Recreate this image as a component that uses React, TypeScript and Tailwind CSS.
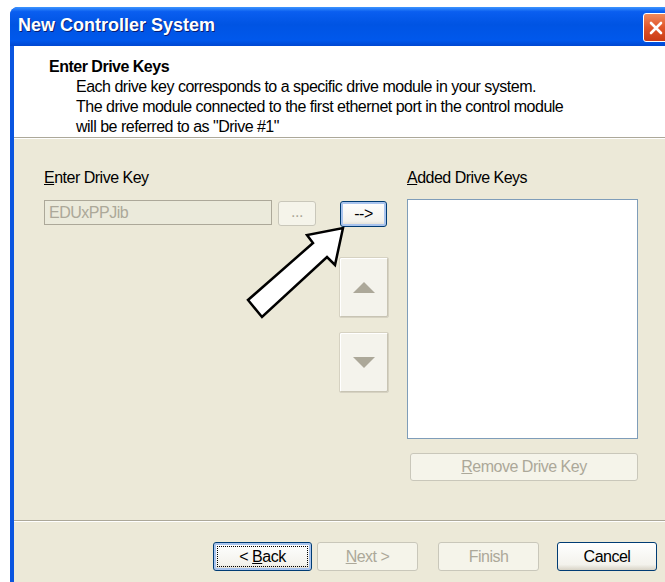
import React from 'react';

type BtnProps = {
  children?: React.ReactNode;
  className?: string;
  variant?: 'normal' | 'default' | 'disabled';
};

// Luna-style push button
const XpButton = ({ children, className = '', variant = 'normal' }: BtnProps) => {
  const look =
    variant === 'disabled'
      ? 'border-[#c9c7ba] bg-[#f5f4ea] text-[#aca899]'
      : variant === 'default'
        ? 'border-[#003c74] bg-[linear-gradient(to_bottom,#ffffff,#f3f2ec_80%,#dcd8cc)] text-black shadow-[inset_0_0_0_2px_#a9c4ee]'
        : 'border-[#003c74] bg-[linear-gradient(to_bottom,#ffffff,#f3f2ec_80%,#d8d3c6)] text-black';
  return (
    <div
      className={`flex shrink-0 items-center justify-center rounded-[3px] border text-[16px] leading-none tracking-[-0.5px] ${look} ${className}`}
    >
      {children}
    </div>
  );
};

// Greyed-out move button with a triangle glyph
const ArrowButton = ({ up }: { up: boolean }) => (
  <div className="flex h-[61px] w-[50px] items-center justify-center rounded-[2px] border border-[#d6d2c2] bg-[#f4f3ec] shadow-[inset_-1px_-1px_0_#c8c4b4,inset_1px_1px_0_#ffffff]">
    <svg width="22" height="11" viewBox="0 0 22 11">
      {up ? <polygon points="0,11 22,11 11,0" fill="#aca899" /> : <polygon points="0,0 22,0 11,11" fill="#aca899" />}
    </svg>
  </div>
);

const App = () => {
  return (
    <div
      className="h-[582px] w-[665px] overflow-hidden bg-white pl-[10px] pt-[7px]"
      style={{ fontFamily: '"Liberation Sans", Arial, sans-serif' }}
    >
      <div className="flex h-full w-[665px] flex-col overflow-hidden rounded-t-[8px] bg-[#0054e3]">
        {/* Title bar */}
        <div className="flex h-[39px] shrink-0 justify-between bg-[linear-gradient(to_bottom,#3d95ff_0%,#0a5ef0_12%,#0054e3_45%,#0058ec_85%,#0047d1_100%)] pl-[8px] pr-[6px]">
          <span className="self-center pb-[2px] text-[18px] font-bold text-white [text-shadow:1px_1px_0_#0a1e72]">
            New Controller System
          </span>
          <div className="mt-[6px] flex h-[29px] w-[26px] items-center justify-center rounded-[3px] border border-white bg-[linear-gradient(to_bottom,#f08a5d,#e0552a_50%,#c93b16)]">
            <svg width="14" height="14" viewBox="0 0 14 14">
              <path d="M2 2 L12 12 M12 2 L2 12" stroke="white" strokeWidth="2.6" strokeLinecap="round" />
            </svg>
          </div>
        </div>

        {/* Client area */}
        <div className="flex flex-1 flex-col border-l-4 border-[#0a55e0] bg-[#ece9d8]">
          {/* Header */}
          <div className="h-[91px] shrink-0 bg-white pl-[35px] pt-[11px] text-[16px] leading-[20px] tracking-[-0.5px] text-black">
            <div className="font-bold">Enter Drive Keys</div>
            <div className="pl-[27px]">
              <div>Each drive key corresponds to a specific drive module in your system.</div>
              <div>The drive module connected to the first ethernet port in the control module</div>
              <div>will be referred to as &quot;Drive #1&quot;</div>
            </div>
          </div>
          <div className="h-px shrink-0 bg-[#aca899]" />
          <div className="h-px shrink-0 bg-white" />

          {/* Body */}
          <div className="relative flex flex-1 pl-[30px] pt-[29px] text-[16px] leading-[20px] tracking-[-0.5px] text-black">
            <div className="flex w-[345px] flex-col">
              <div>
                <span className="underline">E</span>nter Drive Key
              </div>
              <div className="mt-[12px] flex items-start">
                <div className="flex h-[25px] w-[228px] items-center border border-[#aca899] bg-[#ebeadb] pl-[4px] text-[#aca899]">
                  EDUxPPJib
                </div>
                <XpButton variant="disabled" className="ml-[6px] mt-[1px] h-[25px] w-[38px] pb-[4px] text-[12px]">
                  ...
                </XpButton>
                <XpButton variant="default" className="ml-[24px] mt-[1px] h-[26px] w-[47px] text-[14px]">
                  --&gt;
                </XpButton>
              </div>
              <div className="ml-[295px] mt-[30px] flex flex-col gap-[14px]">
                <ArrowButton up />
                <ArrowButton up={false} />
              </div>
            </div>

            <div className="ml-[18px] flex w-[231px] flex-col">
              <div>
                <span className="underline">A</span>dded Drive Keys
              </div>
              <div className="mt-[11px] h-[240px] border border-[#7f9db9] bg-white" />
              <XpButton variant="disabled" className="ml-[3px] mt-[14px] h-[28px] w-[228px]">
                <span>
                  <span className="underline">R</span>emove Drive Key
                </span>
              </XpButton>
            </div>

            {/* Callout arrow pointing at the add button */}
            <svg className="absolute left-[230px] top-[76px]" width="110" height="110" viewBox="0 0 110 110">
              <polygon
                points="99,13 91,50 83,42 18,102 4,85 69,28 63,20"
                fill="white"
                stroke="black"
                strokeWidth="2.5"
                strokeLinejoin="miter"
              />
            </svg>
          </div>

          <div className="h-px shrink-0 bg-[#aca899]" />
          <div className="h-px shrink-0 bg-white" />

          {/* Wizard buttons */}
          <div className="flex h-[60px] shrink-0 items-start pl-[199px] pt-[20px]">
            <XpButton variant="default" className="h-[29px] w-[99px] p-[3px]">
              <div className="flex h-full w-full items-center justify-center border border-dotted border-black">
                <span>
                  &lt; <span className="underline">B</span>ack
                </span>
              </div>
            </XpButton>
            <XpButton variant="disabled" className="ml-[5px] h-[29px] w-[101px]">
              <span>
                <span className="underline">N</span>ext &gt;
              </span>
            </XpButton>
            <XpButton variant="disabled" className="ml-[20px] h-[29px] w-[101px]">
              Finish
            </XpButton>
            <XpButton className="ml-[18px] h-[29px] w-[100px]">Cancel</XpButton>
          </div>
        </div>
      </div>
    </div>
  );
};

export default App;
